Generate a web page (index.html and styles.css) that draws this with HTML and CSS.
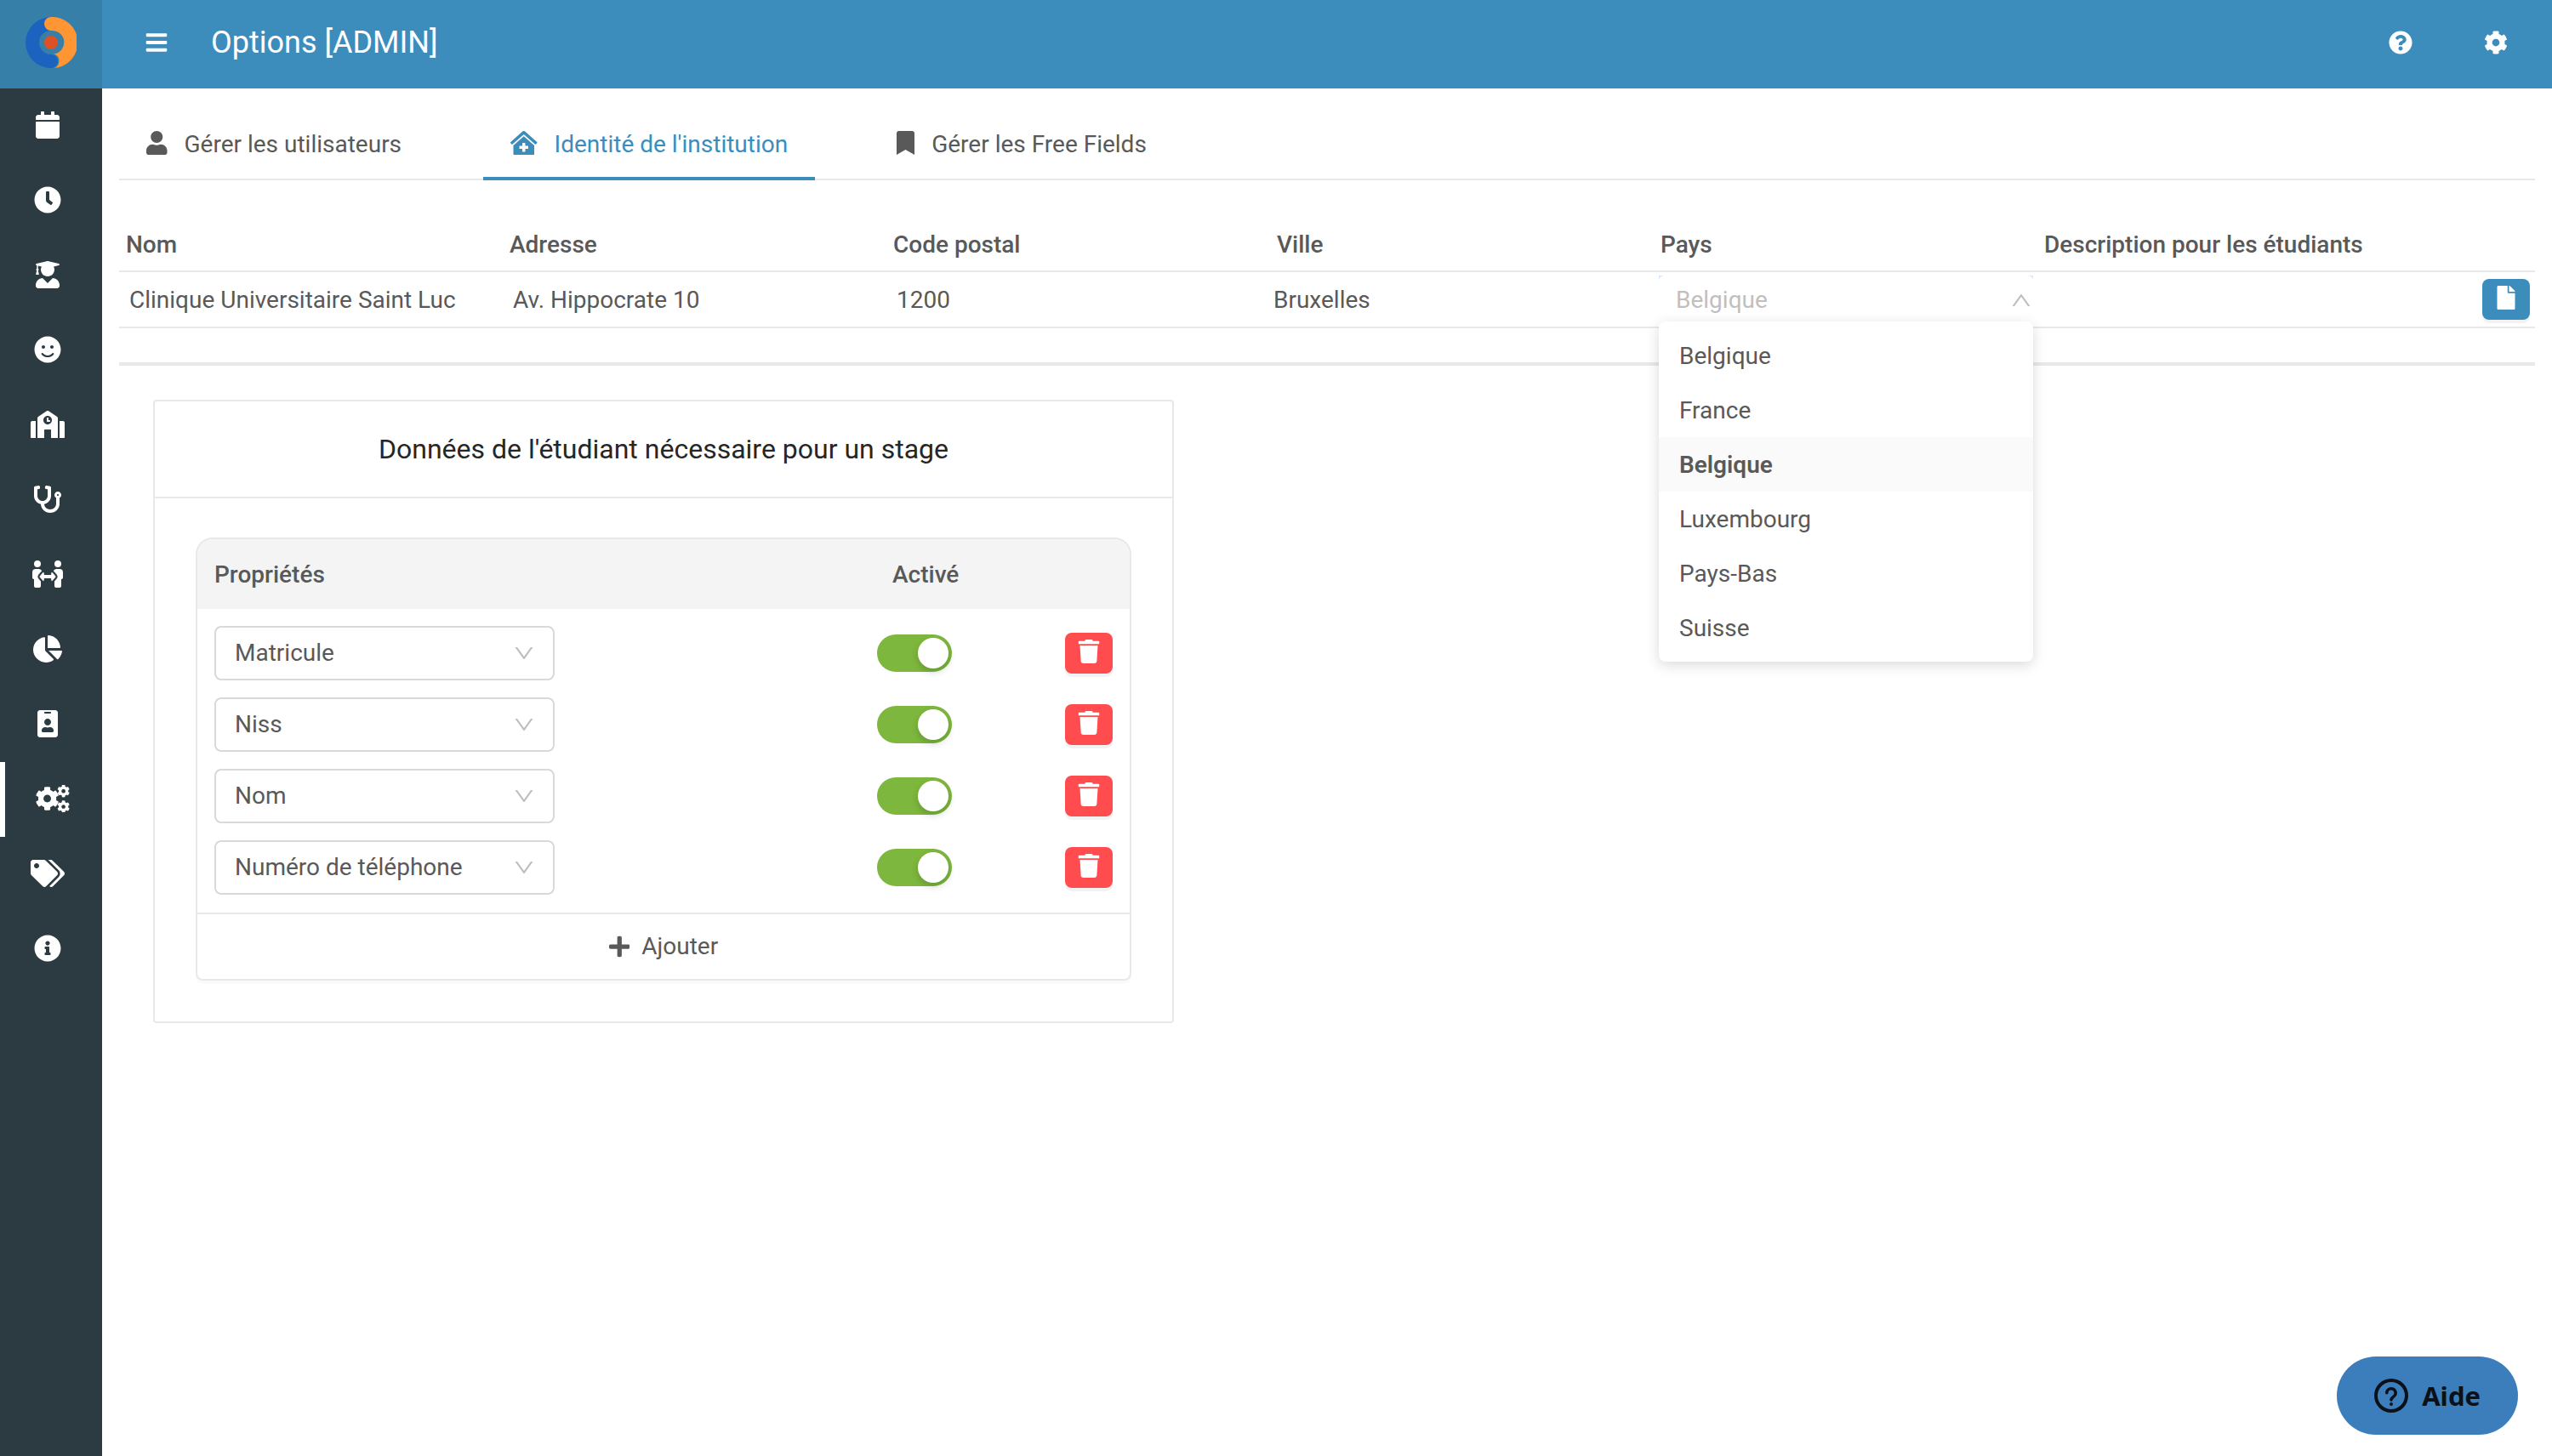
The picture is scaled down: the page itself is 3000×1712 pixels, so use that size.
FILE: index.html
```
<!DOCTYPE html>
<html lang="fr">
<head>
    <meta charset="utf-8">
    <meta name="viewport" content="width=device-width, initial-scale=1">
    <title>Options [ADMIN]</title>
    <link rel="stylesheet" href="styles.css">
</head>
<body>

<!-- shared icons -->
<svg class="sprite" aria-hidden="true">
    <symbol id="chevron" viewBox="0 0 1024 1024">
        <path d="M884 256h-75c-5.100 0-9.900 2.500-12.900 6.600L512 654.200 227.900 262.600c-3-4.100-7.800-6.600-12.900-6.600h-75c-6.500 0-10.300 7.400-6.500 12.700l352.600 486.100c12.800 17.600 39 17.600 51.700 0l352.600-486.100c3.900-5.300.1-12.700-6.400-12.700z"/>
    </symbol>
    <symbol id="trash" viewBox="0 0 448 512">
        <path d="M432 32H312l-9.400-18.700A24 24 0 0 0 281.100 0H166.800a23.720 23.720 0 0 0-21.400 13.300L136 32H16A16 16 0 0 0 0 48v32a16 16 0 0 0 16 16h416a16 16 0 0 0 16-16V48a16 16 0 0 0-16-16zM53.200 467a48 48 0 0 0 47.900 45h245.800a48 48 0 0 0 47.900-45L416 128H32z"/>
    </symbol>
    <symbol id="cog" viewBox="0 0 512 512">
        <path d="M487.400 315.700l-42.600-24.600c4.300-23.200 4.300-47 0-70.200l42.600-24.600c4.900-2.800 7.100-8.600 5.500-14-11.100-35.600-30-67.800-54.700-94.600-3.800-4.100-10-5.100-14.800-2.300L380.800 110c-17.900-15.400-38.500-27.300-60.800-35.100V25.800c0-5.600-3.900-10.500-9.400-11.700-36.700-8.200-74.300-7.800-109.200 0-5.500 1.200-9.400 6.100-9.400 11.700V75c-22.200 7.900-42.800 19.800-60.800 35.100L88.700 85.500c-4.900-2.800-11-1.900-14.800 2.300-24.700 26.700-43.600 58.900-54.700 94.600-1.700 5.400.6 11.200 5.500 14L67.300 221c-4.300 23.200-4.300 47 0 70.200l-42.600 24.600c-4.900 2.800-7.100 8.600-5.500 14 11.100 35.600 30 67.800 54.700 94.600 3.800 4.100 10 5.100 14.800 2.300l42.600-24.600c17.900 15.400 38.500 27.300 60.800 35.100v49.200c0 5.600 3.900 10.500 9.400 11.700 36.700 8.200 74.300 7.800 109.200 0 5.500-1.200 9.400-6.100 9.400-11.700v-49.200c22.200-7.900 42.800-19.800 60.800-35.100l42.600 24.600c4.900 2.800 11 1.900 14.800-2.300 24.700-26.700 43.600-58.900 54.700-94.600 1.500-5.500-.7-11.300-5.600-14.100zM256 336c-44.100 0-80-35.900-80-80s35.900-80 80-80 80 35.900 80 80-35.900 80-80 80z"/>
    </symbol>
</svg>

<aside class="sidebar">
    <a href="#" class="logo" aria-label="Accueil">
        <svg viewBox="0 0 60 60">
            <path fill="#1c63c0" d="M30 0A30 30 0 0 0 30 60A8 8 0 0 0 30 44A14 14 0 0 1 30 16Z"/>
            <path fill="#ff9633" d="M30 0A8 8 0 0 0 30 16A13.500 13.500 0 0 1 33 43.500A8.500 8.500 0 0 1 33 60A30 30 0 0 0 30 0Z"/>
            <circle cx="30" cy="30" r="8" fill="#dd5125"/>
        </svg>
    </a>
    <nav class="menu">
        <a href="#" aria-label="Calendrier"><svg viewBox="0 0 448 512"><path d="M12 192h424c6.600 0 12 5.400 12 12v260c0 26.500-21.500 48-48 48H48c-26.500 0-48-21.500-48-48V204c0-6.600 5.400-12 12-12zm436-44v-36c0-26.500-21.500-48-48-48h-48V12c0-6.600-5.400-12-12-12h-40c-6.600 0-12 5.400-12 12v52H160V12c0-6.600-5.400-12-12-12h-40c-6.600 0-12 5.400-12 12v52H48C21.500 64 0 85.500 0 112v36c0 6.600 5.400 12 12 12h424c6.600 0 12-5.400 12-12z"/></svg></a>
        <a href="#" aria-label="Horaires"><svg viewBox="0 0 512 512"><path d="M256 8C119 8 8 119 8 256s111 248 248 248 248-111 248-248S393 8 256 8zm92.500 313l-20 25a16 16 0 0 1-22.500 2.500l-67-49.700a40 40 0 0 1-15-31.200V112a16 16 0 0 1 16-16h32a16 16 0 0 1 16 16v144l58 42.500a16 16 0 0 1 2.500 22.500z"/></svg></a>
        <a href="#" aria-label="Étudiants"><svg viewBox="0 0 448 512"><path d="M319.400 320.600L224 416l-95.400-95.400C57.100 323.700 0 382.200 0 454.400v9.600c0 26.500 21.500 48 48 48h352c26.500 0 48-21.500 48-48v-9.600c0-72.200-57.100-130.700-128.600-133.800zM13.600 79.800l6.400 1.500v58.400c-7 4.200-12 11.500-12 20.300 0 8.400 4.600 15.400 11.100 19.700L3.500 242c-1.700 6.900 2.100 14 7.600 14h41.800c5.500 0 9.300-7.100 7.600-14l-15.600-62.300C51.400 175.400 56 168.400 56 160c0-8.800-5-16.100-12-20.300V87.100l66 15.900c-8.600 17.200-14 36.400-14 57 0 70.700 57.300 128 128 128s128-57.300 128-128c0-20.600-5.300-39.800-14-57l96.300-23.200c18.200-4.400 18.200-27.100 0-31.500l-190.400-46c-13-3.100-26.700-3.100-39.700 0L13.600 48.200c-18.100 4.400-18.100 27.200 0 31.600z"/></svg></a>
        <a href="#" aria-label="Satisfaction"><svg viewBox="0 0 496 512"><path d="M248 8C111 8 0 119 0 256s111 248 248 248 248-111 248-248S385 8 248 8zm80 168c17.700 0 32 14.300 32 32s-14.300 32-32 32-32-14.300-32-32 14.300-32 32-32zm-160 0c17.700 0 32 14.300 32 32s-14.300 32-32 32-32-14.300-32-32 14.300-32 32-32zm194.800 170.200C334.300 380.400 292.500 400 248 400s-86.300-19.600-114.800-53.800c-13.600-16.300 11-36.700 24.600-20.500 22.400 26.900 55.200 42.200 90.200 42.200s67.800-15.400 90.200-42.200c13.400-16.200 38.100 4.200 24.600 20.500z"/></svg></a>
        <a href="#" aria-label="Écoles"><svg viewBox="0 0 640 512"><path d="M0 224v272c0 8.800 7.200 16 16 16h80V192H32c-17.700 0-32 14.300-32 32zm360-48h-24v-40c0-4.400-3.600-8-8-8h-16c-4.400 0-8 3.600-8 8v64c0 4.400 3.600 8 8 8h48c4.400 0 8-3.600 8-8v-16c0-4.400-3.600-8-8-8zm137.800-64L337.800 5.300a32 32 0 0 0-35.500 0L142.300 112A32 32 0 0 0 128 138.600V512h128V368c0-8.800 7.200-16 16-16h96c8.800 0 16 7.200 16 16v144h128V138.600c0-10.700-5.300-20.700-14.200-26.600zM320 256c-44.200 0-80-35.800-80-80s35.800-80 80-80 80 35.800 80 80-35.800 80-80 80zm288-64h-64v320h80c8.800 0 16-7.200 16-16V224c0-17.700-14.300-32-32-32z"/></svg></a>
        <a href="#" aria-label="Médecine"><svg viewBox="0 0 512 512"><path d="M447.100 112c-34.200.5-62.300 28.400-63 62.600-.5 24.300 12.500 45.600 32 56.800V344c0 57.300-50.200 104-112 104-60 0-109.200-44.100-111.900-99.200C265 333.800 320 269.200 320 192V36.600c0-11.400-8.100-21.300-19.300-23.500L237.800.5c-13-2.600-25.600 5.800-28.200 18.800L206.400 35c-2.600 13 5.800 25.600 18.800 28.200l30.700 6.100v121.400c0 52.900-42.200 96.700-95.100 97.200-53.400.5-96.900-42.700-96.900-96V69.400l30.700-6.100c13-2.600 21.400-15.200 18.800-28.200l-3.100-15.700C107.700 6.400 95.100-2 82.100.6L19.300 13C8.100 15.300 0 25.100 0 36.600V192c0 77.300 55.100 142 128.100 156.800C130.700 439.200 208.600 512 304 512c97 0 176-75.400 176-168V231.400c19.100-11.100 32-31.700 32-55.400 0-35.700-29.200-64.500-64.900-64zm.9 80c-8.800 0-16-7.200-16-16s7.200-16 16-16 16 7.200 16 16-7.200 16-16 16z"/></svg></a>
        <a href="#" aria-label="Échanges"><svg viewBox="0 0 576 512"><path d="M96 128a64 64 0 1 0 0-128 64 64 0 0 0 0 128zm384 0a64 64 0 1 0 0-128 64 64 0 0 0 0 128zM444.400 304l-61.300-73.500A16 16 0 0 0 355 241v32H221v-32a16 16 0 0 0-28.100-10.500L131.600 304l61.300 73.500A16 16 0 0 0 221 367v-32h134v32a16 16 0 0 0 28.100 10.500zM119 344a62 62 0 0 1 0-80l48-56 13-14A72 72 0 0 0 128 160H64a64 64 0 0 0-64 64v96c0 17.900 12.600 32.700 32 32v128a32 32 0 0 0 32 32h64a32 32 0 0 0 32-32v-88zm338 0a62 62 0 0 0 0-80l-48-56-13-14a72 72 0 0 1 52-34h64a64 64 0 0 1 64 64v96c0 17.900-12.600 32.700-32 32v128a32 32 0 0 1-32 32h-64a32 32 0 0 1-32-32v-88z"/></svg></a>
        <a href="#" aria-label="Statistiques"><svg viewBox="0 0 544 512"><path d="M527.800 288H290.500l158 158c6 6 15.800 6.500 21.900.4 38.700-36.300 65.600-85.700 73.100-141.200 1.300-9.100-6.100-17.200-15.700-17.200zm-15.800-64.800C503.700 103.700 408.300 8.300 288.800 0c-9.100-.6-16.800 7.100-16.800 16.200V240h223.800c9.100 0 16.800-7.700 16.200-16.800zM224 288V50.700c0-9.600-8.100-17-17.200-15.700C86.800 51.900-4.600 156.600.2 281.900c5 128.500 114.100 231.700 242.700 230.100 50.600-.6 97.300-16.900 135.700-44.100 7.900-5.600 8.400-17.200 1.600-24.100z"/></svg></a>
        <a href="#" aria-label="Badges"><svg viewBox="0 0 384 512"><path d="M336 0H48C21.500 0 0 21.500 0 48v416c0 26.500 21.500 48 48 48h288c26.500 0 48-21.500 48-48V48c0-26.500-21.500-48-48-48zM144 32h96c8.800 0 16 7.200 16 16s-7.200 16-16 16h-96c-8.800 0-16-7.200-16-16s7.200-16 16-16zm48 128c35.300 0 64 28.700 64 64s-28.700 64-64 64-64-28.700-64-64 28.700-64 64-64zm112 236.800c0 10.600-10 19.200-22.400 19.200H102.400C90 416 80 407.400 80 396.800v-19.200c0-31.800 30.100-57.600 67.200-57.600h5c12.300 5.100 25.700 8 39.800 8s27.600-2.900 39.800-8h5c37.100 0 67.200 25.800 67.200 57.600z"/></svg></a>
        <a href="#" class="active" aria-label="Options">
            <svg viewBox="0 0 640 512">
                <svg x="-10" y="22" width="454" height="468" viewBox="0 0 512 512"><use href="#cog"/></svg>
                <svg x="402" y="-6" width="240" height="240" viewBox="0 0 512 512"><use href="#cog"/></svg>
                <svg x="402" y="288" width="240" height="240" viewBox="0 0 512 512"><use href="#cog"/></svg>
            </svg>
        </a>
        <a href="#" aria-label="Étiquettes"><svg viewBox="0 0 640 512"><path d="M497.900 225.900L286.100 14.100A48 48 0 0 0 252.100 0H48C21.500 0 0 21.500 0 48v204.100a48 48 0 0 0 14.100 33.900l211.800 211.900c18.700 18.700 49.100 18.700 67.900 0l204.100-204.100c18.800-18.800 18.800-49.100 0-67.900zM112 160c-26.500 0-48-21.500-48-48s21.500-48 48-48 48 21.500 48 48-21.500 48-48 48zm513.900 133.800L421.800 497.900c-18.700 18.700-49.100 18.700-67.900 0l-.4-.4L527.600 323.500c17-17 26.400-39.600 26.400-63.600s-9.400-46.600-26.400-63.600L331.400 0h48.700a48 48 0 0 1 33.900 14.100l211.900 211.800c18.700 18.800 18.700 49.100 0 67.900z"/></svg></a>
        <a href="#" aria-label="Informations"><svg viewBox="0 0 512 512"><path d="M256 8C119 8 8 119.100 8 256c0 137 111 248 248 248s248-111 248-248C504 119.100 393 8 256 8zm0 110c23.200 0 42 18.800 42 42s-18.800 42-42 42-42-18.800-42-42 18.800-42 42-42zm56 254c0 6.600-5.400 12-12 12h-88c-6.600 0-12-5.400-12-12v-24c0-6.600 5.400-12 12-12h12v-64h-12c-6.600 0-12-5.400-12-12v-24c0-6.600 5.400-12 12-12h64c6.600 0 12 5.400 12 12v100h12c6.600 0 12 5.400 12 12z"/></svg></a>
    </nav>
</aside>

<div class="page">
    <header class="topbar">
        <button type="button" class="icon-btn" aria-label="Menu"><svg viewBox="0 0 448 512"><path d="M16 132h416c8.800 0 16-7.200 16-16V76c0-8.800-7.200-16-16-16H16C7.200 60 0 67.200 0 76v40c0 8.800 7.200 16 16 16zm0 160h416c8.800 0 16-7.200 16-16v-40c0-8.800-7.200-16-16-16H16c-8.800 0-16 7.200-16 16v40c0 8.800 7.200 16 16 16zm0 160h416c8.800 0 16-7.200 16-16v-40c0-8.800-7.200-16-16-16H16c-8.800 0-16 7.200-16 16v40c0 8.800 7.200 16 16 16z"/></svg></button>
        <h1>Options [ADMIN]</h1>
        <div class="topbar-actions">
            <button type="button" class="icon-btn" aria-label="Aide"><svg viewBox="0 0 512 512"><path d="M504 256c0 137-111 248-248 248S8 393 8 256C8 119.100 119 8 256 8s248 111.100 248 248zM262.700 90c-54.500 0-89.300 23-116.500 63.800-3.500 5.300-2.400 12.400 2.700 16.300l34.700 26.300c5.200 3.900 12.600 3 16.700-2.100 17.900-22.700 30.100-35.800 57.300-35.800 20.400 0 45.700 13.100 45.700 33 0 15-12.400 22.700-32.500 34C247.100 238.500 216 254.900 216 296v4c0 6.600 5.400 12 12 12h56c6.600 0 12-5.400 12-12v-1.300c0-28.500 83.200-29.600 83.200-106.700 0-58-60.200-102-116.500-102zM256 338c-25.400 0-46 20.600-46 46 0 25.400 20.600 46 46 46s46-20.600 46-46c0-25.400-20.600-46-46-46z"/></svg></button>
            <button type="button" class="icon-btn" aria-label="Paramètres"><svg viewBox="0 0 512 512"><use href="#cog"/></svg></button>
        </div>
    </header>

    <main>
        <nav class="tabs">
            <a href="#"><svg viewBox="0 0 448 512"><path d="M224 256c70.700 0 128-57.300 128-128S294.700 0 224 0 96 57.300 96 128s57.300 128 128 128zm89.600 32h-16.700c-22.200 10.200-46.900 16-72.900 16s-50.600-5.800-72.900-16h-16.700C60.200 288 0 348.200 0 422.400V464c0 26.500 21.500 48 48 48h352c26.500 0 48-21.500 48-48v-41.600c0-74.200-60.200-134.400-134.400-134.400z"/></svg>Gérer les utilisateurs</a>
            <a href="#" class="active"><svg viewBox="0 0 576 512"><path d="M288 115L69.500 307.700c-1.600 1.500-3.700 2.100-5.500 3.400V496a16 16 0 0 0 16 16h416a16 16 0 0 0 16-16V311.100c-1.700-1.200-3.700-1.800-5.300-3.200zm96 261a8 8 0 0 1-8 8h-56v56a8 8 0 0 1-8 8h-48a8 8 0 0 1-8-8v-56h-56a8 8 0 0 1-8-8v-48a8 8 0 0 1 8-8h56v-56a8 8 0 0 1 8-8h48a8 8 0 0 1 8 8v56h56a8 8 0 0 1 8 8zm186.700-139.700l-255.900-226a39.900 39.900 0 0 0-53.500 0l-256 226a16 16 0 0 0-1.200 22.600l21.400 23.800a16 16 0 0 0 22.600 1.200L277.400 80.600a16 16 0 0 1 21.200 0L527.900 283.900a16 16 0 0 0 22.600-1.200l21.400-23.800a16 16 0 0 0-1.200-22.600z"/></svg>Identité de l'institution</a>
            <a href="#"><svg viewBox="0 0 384 512"><path d="M0 512V48C0 21.500 21.500 0 48 0h288c26.500 0 48 21.500 48 48v464L192 400 0 512z"/></svg>Gérer les Free Fields</a>
        </nav>

        <table class="institution">
            <colgroup>
                <col span="6">
                <col class="col-action">
            </colgroup>
            <thead>
            <tr>
                <th>Nom</th>
                <th>Adresse</th>
                <th>Code postal</th>
                <th>Ville</th>
                <th>Pays</th>
                <th>Description pour les étudiants</th>
                <th></th>
            </tr>
            </thead>
            <tbody>
            <tr>
                <td>Clinique Universitaire Saint Luc</td>
                <td>Av. Hippocrate 10</td>
                <td>1200</td>
                <td class="city">Bruxelles</td>
                <td class="country">
                    <button type="button" class="country-select" aria-haspopup="listbox" aria-expanded="true" aria-label="Pays"><span>Belgique<svg class="chevron up"><use href="#chevron"/></svg></span></button>
                    <ul class="dropdown" role="listbox" aria-label="Pays">
                        <li role="option">Belgique</li>
                        <li role="option">France</li>
                        <li role="option" class="selected" aria-selected="true">Belgique</li>
                        <li role="option">Luxembourg</li>
                        <li role="option">Pays-Bas</li>
                        <li role="option">Suisse</li>
                    </ul>
                </td>
                <td></td>
                <td class="action">
                    <button type="button" class="btn primary" aria-label="Document"><svg viewBox="0 0 384 512"><path d="M224 136V0H24C10.700 0 0 10.700 0 24v464c0 13.300 10.700 24 24 24h336c13.300 0 24-10.700 24-24V160H248c-13.200 0-24-10.800-24-24zm160-14.100v6.100H256V0h6.100c6.400 0 12.500 2.500 17 7l97.900 98c4.500 4.500 7 10.600 7 16.900z"/></svg></button>
                </td>
            </tr>
            </tbody>
        </table>

        <section class="card">
            <h2>Données de l'étudiant nécessaire pour un stage</h2>
            <div class="card-body">
                <div class="panel">
                    <table class="properties">
                        <thead>
                        <tr>
                            <th>Propriétés</th>
                            <th class="enabled">Activé</th>
                            <th class="remove"></th>
                        </tr>
                        </thead>
                        <tbody>
                        <tr>
                            <td><div class="select"><select aria-label="Propriété 1"><option>Matricule</option></select><svg class="chevron"><use href="#chevron"/></svg></div></td>
                            <td><input type="checkbox" class="switch" aria-label="Activer Matricule" checked></td>
                            <td><button type="button" class="btn danger" aria-label="Supprimer Matricule"><svg><use href="#trash"/></svg></button></td>
                        </tr>
                        <tr>
                            <td><div class="select"><select aria-label="Propriété 2"><option>Niss</option></select><svg class="chevron"><use href="#chevron"/></svg></div></td>
                            <td><input type="checkbox" class="switch" aria-label="Activer Niss" checked></td>
                            <td><button type="button" class="btn danger" aria-label="Supprimer Niss"><svg><use href="#trash"/></svg></button></td>
                        </tr>
                        <tr>
                            <td><div class="select"><select aria-label="Propriété 3"><option>Nom</option></select><svg class="chevron"><use href="#chevron"/></svg></div></td>
                            <td><input type="checkbox" class="switch" aria-label="Activer Nom" checked></td>
                            <td><button type="button" class="btn danger" aria-label="Supprimer Nom"><svg><use href="#trash"/></svg></button></td>
                        </tr>
                        <tr>
                            <td><div class="select"><select aria-label="Propriété 4"><option>Numéro de téléphone</option></select><svg class="chevron"><use href="#chevron"/></svg></div></td>
                            <td><input type="checkbox" class="switch" aria-label="Activer Numéro de téléphone" checked></td>
                            <td><button type="button" class="btn danger" aria-label="Supprimer Numéro de téléphone"><svg><use href="#trash"/></svg></button></td>
                        </tr>
                        </tbody>
                    </table>
                    <button type="button" class="add"><svg viewBox="0 0 448 512"><path d="M416 208H272V64c0-17.700-14.300-32-32-32h-32c-17.700 0-32 14.300-32 32v144H32c-17.700 0-32 14.300-32 32v32c0 17.700 14.300 32 32 32h144v144c0 17.700 14.300 32 32 32h32c17.700 0 32-14.300 32-32V304h144c17.700 0 32-14.300 32-32v-32c0-17.700-14.300-32-32-32z"/></svg>Ajouter</button>
                </div>
            </div>
        </section>
    </main>
</div>

<button type="button" class="help">
    <svg viewBox="0 0 20 20"><path d="M10 0a10 10 0 1 0 0 20 10 10 0 0 0 0-20zm0 2a8 8 0 1 1 0 16 8 8 0 0 1 0-16zm0 12a1 1 0 1 0 0 2 1 1 0 0 0 0-2zm0-9a3.500 3.500 0 0 0-3.500 3.200.9.900 0 0 0 1.800.2A1.700 1.700 0 0 1 10 6.700c1 0 1.700.7 1.700 1.700 0 .7-.4 1.200-1.200 1.900C9.600 11 9.100 11.600 9.100 12.500a.9.900 0 0 0 1.800 0c0-.3.300-.6.900-1.100.8-.7 1.700-1.600 1.700-3A3.400 3.400 0 0 0 10 5z"/></svg>
    Aide
</button>

</body>
</html>
```
FILE: styles.css
```
* {
    box-sizing: border-box;
}

body {
    display: flex;
    min-height: 100vh;
    margin: 0;
    background: #fff;
    color: #595959;
    font-family: Roboto, sans-serif;
    font-size: 28px;
    line-height: 44px;
}

button,
select {
    font: inherit;
    color: inherit;
    border: 0;
    padding: 0;
    background: none;
    cursor: pointer;
}

a {
    color: inherit;
    text-decoration: none;
}

svg {
    display: block;
    fill: currentColor;
}

.sprite {
    position: absolute;
    width: 0;
    height: 0;
}

/* sidebar */

.sidebar {
    flex: none;
    width: 120px;
    background: #2c3b41;
    color: #fff;
}

.logo {
    display: block;
    height: 104px;
    padding: 20px 30px;
    background: #367fa9;
}

.logo svg {
    width: 60px;
    height: 60px;
}

.menu a {
    display: flex;
    align-items: center;
    height: 88px;
    padding: 0 0 2px 36px;
}

.menu a.active {
    border-left: 6px solid #fff;
}

.menu a > svg {
    width: 40px;
    height: 32px;
}

/* top bar */

.page {
    flex: 1;
    min-width: 0;
}

.topbar {
    display: flex;
    align-items: center;
    height: 104px;
    padding: 0 52px 4px 50px;
    background: #3c8dbc;
    color: #fff;
}

.topbar h1 {
    margin: 0 0 0 50px;
    font-size: 36px;
    font-weight: 400;
}

.topbar-actions {
    display: flex;
    gap: 84px;
    margin-left: auto;
}

.icon-btn svg {
    width: 28px;
    height: 28px;
}

main {
    padding: 20px;
}

/* tabs */

.tabs {
    display: flex;
    gap: 64px;
    height: 88px;
    border-bottom: 2px solid #e8e8e8;
}

.tabs a {
    display: flex;
    align-items: center;
    gap: 20px;
    height: 88px;
    padding: 8px 32px 0;
    border-bottom: 4px solid transparent;
}

.tabs a.active {
    color: #3c8dbc;
    border-color: #3c8dbc;
}

.tabs svg {
    height: 28px;
    margin-bottom: 4px;
}

/* institution */

table {
    width: 100%;
    border-collapse: collapse;
    text-align: left;
}

th {
    font-weight: 500;
}

.institution {
    margin-top: 44px;
    table-layout: fixed;
    border-bottom: 4px solid #e8e8e8;
    border-collapse: separate;
    border-spacing: 0;
    padding-bottom: 40px;
}

.col-action {
    width: 134px;
}

.institution th {
    height: 64px;
    padding: 2px 8px 0;
    border-bottom: 2px solid #e8e8e8;
}

.institution td {
    height: 66px;
    padding: 2px 12px 0;
    border-bottom: 2px solid #e8e8e8;
}

.institution .city {
    padding-left: 4px;
}

.institution .country {
    position: relative;
    padding: 0 5px 2px 6px;
}

.institution .action {
    padding: 0 6px;
}

.action .btn {
    margin-left: auto;
}

/* the focus ring only shows in the two top corners */
.country-select {
    display: block;
    width: 100%;
    background: #cfe8ff;
}

.country-select span {
    display: flex;
    align-items: center;
    justify-content: space-between;
    height: 54px;
    padding: 4px 0 0 20px;
    border-radius: 6px 6px 0 0;
    background: #fff;
    color: #bfbfbf;
}

.dropdown {
    position: absolute;
    top: 58px;
    left: 6px;
    right: 5px;
    z-index: 1;
    margin: 0;
    padding: 8px 0;
    list-style: none;
    background: #fff;
    border-radius: 8px;
    box-shadow: 0 4px 16px rgba(0, 0, 0, .15);
}

.dropdown li {
    padding: 11px 24px 9px;
}

.dropdown .selected {
    background: #fafafa;
    font-weight: 600;
}

.chevron {
    width: 28px;
    height: 28px;
    color: #bfbfbf;
}

.chevron.up {
    transform: rotate(180deg);
}

/* buttons */

.btn {
    display: block;
    width: 56px;
    height: 48px;
    padding-bottom: 4px;
    border-radius: 8px;
    color: #fff;
    box-shadow: 0 4px 0 rgba(0, 0, 0, .05);
}

.btn svg {
    width: 26px;
    height: 28px;
    margin: 0 auto;
}

.primary {
    background: #3c8dbc;
}

.danger {
    background: #ff4d4f;
}

/* card */

.card {
    max-width: 1200px;
    margin: 40px 40px 0;
    border: 2px solid #e8e8e8;
    border-radius: 4px;
}

.card h2 {
    margin: 0;
    padding: 34px 48px;
    border-bottom: 2px solid #e8e8e8;
    color: #262626;
    font-size: 32px;
    font-weight: 400;
    text-align: center;
}

.card-body {
    padding: 46px 48px 48px;
}

.panel {
    border: 2px solid #e8e8e8;
    border-radius: 20px 20px 8px 8px;
    overflow: hidden;
    box-shadow: 0 4px 0 rgba(0, 0, 0, .02);
}

.properties th {
    padding: 20px 20px 18px;
    background: #f4f4f4;
}

.properties td {
    padding: 10px 20px;
}

.properties tbody tr:first-child td {
    padding-top: 20px;
}

.properties tbody tr:last-child td {
    padding-bottom: 21px;
}

.properties td:nth-child(2) {
    padding-left: 0;
}

.properties .enabled {
    width: 201px;
    padding-left: 18px;
}

.properties .remove {
    width: 96px;
}

.select {
    position: relative;
    width: 400px;
}

.select select {
    display: block;
    width: 100%;
    height: 64px;
    padding: 0 22px;
    border: 2px solid #d9d9d9;
    border-radius: 8px;
    background: #fff;
    appearance: none;
}

.select .chevron {
    position: absolute;
    top: 18px;
    right: 22px;
    pointer-events: none;
}

.switch {
    display: flex;
    align-items: center;
    justify-content: flex-end;
    width: 88px;
    height: 44px;
    margin: 0;
    padding: 4px;
    border-radius: 22px;
    background: #7eb73d;
    appearance: none;
}

.switch::before {
    content: "";
    width: 36px;
    height: 36px;
    border-radius: 50%;
    background: #fff;
    box-shadow: 0 4px 8px rgba(0, 35, 11, .2);
}

.switch:not(:checked) {
    justify-content: flex-start;
    background: #bfbfbf;
}

.add {
    display: flex;
    align-items: center;
    justify-content: center;
    gap: 14px;
    width: 100%;
    height: 78px;
    border-top: 2px solid #e8e8e8;
}

.add svg {
    height: 28px;
}

/* help widget */

.help {
    position: fixed;
    right: 40px;
    bottom: 25px;
    display: flex;
    align-items: center;
    gap: 16px;
    height: 92px;
    padding: 0 44px;
    border-radius: 46px;
    background: #3c7dbc;
    color: #0b1019;
    font-family: "Noto Sans", sans-serif;
    font-size: 31px;
    font-weight: 700;
}

.help svg {
    width: 40px;
    height: 40px;
}
```
